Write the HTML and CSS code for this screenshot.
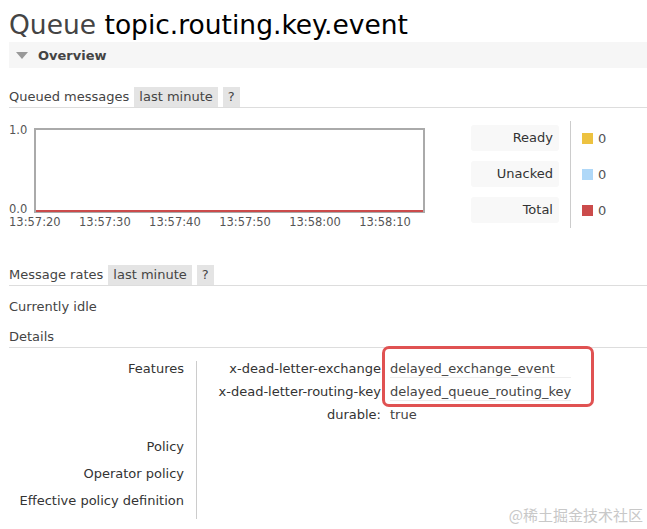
FILE: index.html
```html
<!DOCTYPE html>
<html>
<head>
<meta charset="utf-8">
<link rel="stylesheet" href="styles.css">
</head>
<body>
<h1 class="title"><span class="kind">Queue</span> topic.routing.key.event</h1>
<div class="section-head"><span class="tri"></span><span>Overview</span></div>

<div class="sub-head"><span>Queued messages</span><span class="pill">last minute</span><span class="pill q">?</span></div>

<div class="chart-row">
  <div class="chart">
    <div class="ylabels"><span>1.0</span><span>0.0</span></div>
    <div class="plot"><div class="baseline"></div></div>
    <div class="xlabels"><span>13:57:20</span><span>13:57:30</span><span>13:57:40</span><span>13:57:50</span><span>13:58:00</span><span>13:58:10</span></div>
  </div>
  <div class="legend">
    <div class="legend-labels">
      <div class="lbl">Ready</div>
      <div class="lbl">Unacked</div>
      <div class="lbl">Total</div>
    </div>
    <div class="legend-values">
      <div class="val"><span class="sw yellow"></span>0</div>
      <div class="val"><span class="sw blue"></span>0</div>
      <div class="val"><span class="sw red"></span>0</div>
    </div>
  </div>
</div>

<div class="sub-head rates"><span>Message rates</span><span class="pill">last minute</span><span class="pill q">?</span></div>
<p class="idle">Currently idle</p>
<div class="sub-head details"><span>Details</span></div>

<div class="details-grid">
  <div class="keys">
    <div class="k features">Features</div>
    <div class="k policy">Policy</div>
    <div class="k">Operator policy</div>
    <div class="k">Effective policy definition</div>
  </div>
  <div class="vals">
    <div class="args">
      <div class="ak">x-dead-letter-exchange</div><div class="av">delayed_exchange_event</div>
      <div class="ak">x-dead-letter-routing-key</div><div class="av">delayed_queue_routing_key</div>
      <div class="ak">durable:</div><div class="av plain">true</div>
      <div class="highlight"></div>
    </div>
  </div>
</div>
<div class="watermark">@稀土掘金技术社区</div>
</body>
</html>
```
FILE: styles.css
```css
* { box-sizing: border-box; }
html, body { margin: 0; padding: 0; background: #fff; }
body {
  font-family: "DejaVu Sans", Verdana, sans-serif;
  font-size: 13px;
  color: #444;
  padding: 0 0 0 9px;
  width: 647px;
  height: 529px;
  overflow: hidden;
  position: relative;
}
.title {
  margin: 0;
  padding-top: 9px;
  font-weight: normal;
  font-size: 26.5px;
  line-height: 32px;
  color: #000;
  height: 42px;
}
.title .kind { color: #444; }
.section-head {
  height: 26px;
  background: #f6f6f6;
  display: flex;
  align-items: center;
  gap: 10px;
  padding-left: 7px;
  font-weight: bold;
  color: #444;
  font-size: 13px;
}
.tri {
  width: 0; height: 0;
  border-left: 6px solid transparent;
  border-right: 6px solid transparent;
  border-top: 7px solid #999;
}
.sub-head {
  display: flex;
  align-items: flex-end;
  gap: 5px;
  height: 22px;
  border-bottom: 1px solid #ddd;
  margin-top: 18px;
  line-height: 20px;
  font-size: 13px;
}
.pill {
  background: #e4e4e4;
  padding: 0 5px;
  height: 20px;
  line-height: 20px;
  color: #444;
}
.chart-row {
  display: flex;
  margin-top: 13px;
  height: 107px;
}
.chart {
  width: 430px;
  display: grid;
  grid-template-columns: 25px 391px;
  grid-template-rows: 92px auto;
  font-size: 11.5px;
}
.ylabels {
  display: flex;
  flex-direction: column;
  justify-content: space-between;
  line-height: 11px;
  padding-top: 4px;
  margin-bottom: -2px;
  color: #555;
}
.plot {
  border: 2px solid #aaa;
  border-bottom-width: 1px;
  margin-top: 7px;
  position: relative;
  background: #fff;
}
.baseline {
  position: absolute;
  left: 0; right: 0; bottom: 0;
  height: 2px;
  background: #cb4b4b;
}
.xlabels {
  grid-column: 1 / 3;
  display: flex;
  gap: 18.4px;
  line-height: 12px;
  color: #555;
  padding-top: 3px;
}
.legend {
  display: flex;
  margin-left: 32px;
}
.legend-labels {
  display: flex;
  flex-direction: column;
  gap: 10px;
  padding-top: 4px;
  padding-right: 11px;
  border-right: 1px solid #ccc;
  height: 107px;
}
.lbl {
  width: 88px;
  height: 26px;
  background: #f8f8f8;
  border-radius: 3px;
  text-align: right;
  padding-right: 6px;
  line-height: 26px;
  font-size: 13px;
  color: #333;
}
.legend-values {
  display: flex;
  flex-direction: column;
  gap: 10px;
  padding-top: 4px;
  padding-left: 11px;
}
.val {
  height: 26px;
  display: flex;
  align-items: center;
  gap: 5px;
  font-size: 13px;
  color: #555;
}
.sw { width: 11px; height: 11px; display: inline-block; }
.yellow { background: #edc240; }
.blue { background: #afd8f8; }
.red { background: #cb4b4b; }
.rates { margin-top: 36px; }
.idle {
  margin: 13px 0 0;
  font-size: 13px;
  line-height: 16px;
}
.details { margin-top: 11px; }
.details-grid {
  display: flex;
  margin-top: 13px;
}
.keys {
  width: 188px;
  border-right: 1px solid #ccc;
  padding-right: 12px;
  text-align: right;
  height: 158px;
  font-size: 13px;
  color: #333;
}
.k { height: 27px; line-height: 16px; }
.k.features { height: 78px; }
.vals { position: relative; }
.args {
  position: relative;
  display: grid;
  grid-template-columns: 184px auto;
  column-gap: 9px;
  row-gap: 6px;
  font-size: 13px;
  line-height: 16px;
  color: #333;
}
.ak { text-align: right; white-space: nowrap; }
.av { color: #444; border-bottom: 1px solid #eee; white-space: nowrap; }
.av.plain { border-bottom: none; }
.highlight {
  position: absolute;
  left: 185px;
  top: -15px;
  width: 212px;
  height: 61px;
  border: 3px solid #e05252;
  border-radius: 7px;
}
.watermark {
  position: absolute;
  right: 4px;
  bottom: 4px;
  font-family: "Noto Sans CJK SC", sans-serif;
  font-size: 15px;
  color: #c8c8c8;
}
```
